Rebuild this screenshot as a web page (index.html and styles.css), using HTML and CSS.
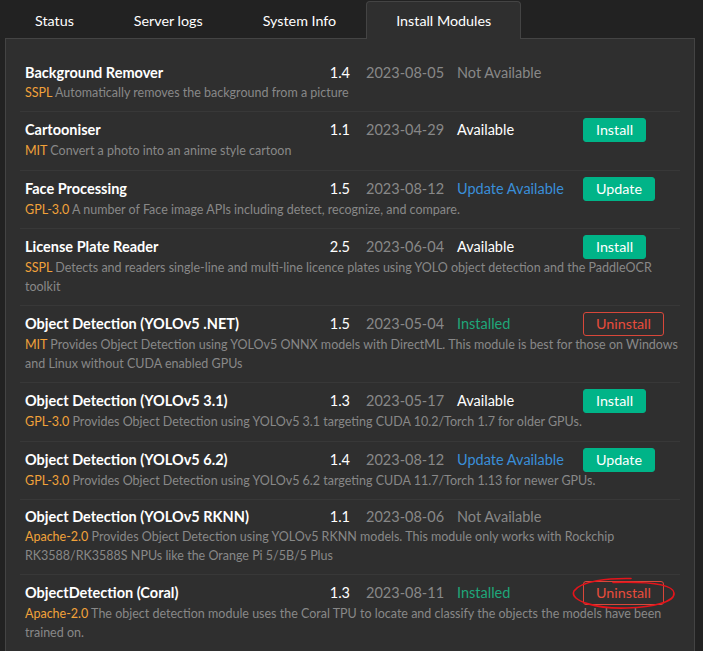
FILE: index.html
```html
<!DOCTYPE html>
<html lang="en">
<head>
    <meta charset="UTF-8">
    <meta name="viewport" content="width=device-width, initial-scale=1.0">
    <title>Install Modules</title>
    <link rel="stylesheet" href="styles.css">
</head>
<body>
    <div class="page">
        <ul class="tabs">
            <li class="tab">Status</li>
            <li class="tab">Server logs</li>
            <li class="tab">System Info</li>
            <li class="tab active">Install Modules</li>
        </ul>
        <div class="panel">
            <div class="module">
                <div class="name-cell"><span class="name">Background Remover</span><span class="version">1.4</span></div>
                <div class="date">2023-08-05</div>
                <div class="status muted">Not Available</div>
                <div class="action"></div>
                <div class="desc"><span class="license">SSPL</span> Automatically removes the background from a picture</div>
            </div>
            <div class="module">
                <div class="name-cell"><span class="name">Cartooniser</span><span class="version">1.1</span></div>
                <div class="date">2023-04-29</div>
                <div class="status">Available</div>
                <div class="action"><button class="btn btn-install">Install</button></div>
                <div class="desc"><span class="license">MIT</span> Convert a photo into an anime style cartoon</div>
            </div>
            <div class="module">
                <div class="name-cell"><span class="name">Face Processing</span><span class="version">1.5</span></div>
                <div class="date">2023-08-12</div>
                <div class="status update">Update Available</div>
                <div class="action"><button class="btn btn-install">Update</button></div>
                <div class="desc"><span class="license">GPL-3.0</span> A number of Face image APIs including detect, recognize, and compare.</div>
            </div>
            <div class="module">
                <div class="name-cell"><span class="name">License Plate Reader</span><span class="version">2.5</span></div>
                <div class="date">2023-06-04</div>
                <div class="status">Available</div>
                <div class="action"><button class="btn btn-install">Install</button></div>
                <div class="desc"><span class="license">SSPL</span> Detects and readers single-line and multi-line licence plates using YOLO object detection and the PaddleOCR toolkit</div>
            </div>
            <div class="module">
                <div class="name-cell"><span class="name">Object Detection (YOLOv5 .NET)</span><span class="version">1.5</span></div>
                <div class="date">2023-05-04</div>
                <div class="status installed">Installed</div>
                <div class="action"><button class="btn btn-uninstall">Uninstall</button></div>
                <div class="desc"><span class="license">MIT</span> Provides Object Detection using YOLOv5 ONNX models with DirectML. This module is best for those on Windows and Linux without CUDA enabled GPUs</div>
            </div>
            <div class="module">
                <div class="name-cell"><span class="name">Object Detection (YOLOv5 3.1)</span><span class="version">1.3</span></div>
                <div class="date">2023-05-17</div>
                <div class="status">Available</div>
                <div class="action"><button class="btn btn-install">Install</button></div>
                <div class="desc"><span class="license">GPL-3.0</span> Provides Object Detection using YOLOv5 3.1 targeting CUDA 10.2/Torch 1.7 for older GPUs.</div>
            </div>
            <div class="module">
                <div class="name-cell"><span class="name">Object Detection (YOLOv5 6.2)</span><span class="version">1.4</span></div>
                <div class="date">2023-08-12</div>
                <div class="status update">Update Available</div>
                <div class="action"><button class="btn btn-install">Update</button></div>
                <div class="desc"><span class="license">GPL-3.0</span> Provides Object Detection using YOLOv5 6.2 targeting CUDA 11.7/Torch 1.13 for newer GPUs.</div>
            </div>
            <div class="module">
                <div class="name-cell"><span class="name">Object Detection (YOLOv5 RKNN)</span><span class="version">1.1</span></div>
                <div class="date">2023-08-06</div>
                <div class="status muted">Not Available</div>
                <div class="action"></div>
                <div class="desc"><span class="license">Apache-2.0</span> Provides Object Detection using YOLOv5 RKNN models. This module only works with Rockchip RK3588/RK3588S NPUs like the Orange Pi 5/5B/5 Plus</div>
            </div>
            <div class="module">
                <div class="name-cell"><span class="name">ObjectDetection (Coral)</span><span class="version">1.3</span></div>
                <div class="date">2023-08-11</div>
                <div class="status installed">Installed</div>
                <div class="action">
                    <button class="btn btn-uninstall">Uninstall</button>
                    <!-- hand drawn circle from the screenshot -->
                    <svg class="scribble" width="110" height="36" viewBox="0 0 110 36">
                        <path d="M62 2.5 C40 2, 12 5, 5 15 C0 25, 28 33, 58 32 C84 31, 106 26, 105 17 C104 9, 82 5.5, 44 6.5" fill="none" stroke="#e4141b" stroke-width="1.6" stroke-linecap="round"/>
                    </svg>
                </div>
                <div class="desc"><span class="license">Apache-2.0</span> The object detection module uses the Coral TPU to locate and classify the objects the models have been trained on.</div>
            </div>
        </div>
    </div>
</body>
</html>
```

FILE: styles.css
```css
body {
    margin: 0;
    padding: 0;
    font-family: 'Lato', 'Noto Sans', sans-serif;
    background: #222;
    color: #fff;
    overflow: hidden;
}

.page {
    padding: 0 8px 0 5px;
}

.tabs {
    list-style: none;
    margin: 0;
    padding: 1px 0 0 0;
    display: flex;
}

.tab {
    font-size: 14.3px;
    line-height: 20px;
    padding: 9px 29px 8px;
    border: 1px solid transparent;
    border-bottom: none;
    border-radius: 4px 4px 0 0;
    margin-bottom: -1px;
    position: relative;
}

.tab.active {
    background: #2f2f2f;
    border-color: #444;
    z-index: 1;
}

.panel {
    background: #2f2f2f;
    border: 1px solid #444;
    padding: 17px 14px 20px;
}

.module {
    display: grid;
    grid-template-columns: 1fr 91px 126px 92px;
    align-items: center;
    padding: 7px 5px 9.3px;
    border-top: 1px solid #383838;
}

.module:first-child {
    border-top: none;
}

.name-cell {
    display: flex;
    justify-content: space-between;
    align-items: center;
    padding-right: 16px;
    line-height: 20px;
}

.name {
    font-weight: bold;
    font-size: 14.5px;
}

.version {
    font-size: 14.5px;
}

.date {
    font-size: 14.5px;
    line-height: 20px;
    color: #888;
}

.status {
    font-size: 14.5px;
    line-height: 20px;
    color: #fff;
}

.status.muted {
    color: #888;
}

.status.update {
    color: #3a8ed8;
}

.status.installed {
    color: #1ea77a;
}

.action {
    position: relative;
    display: flex;
    align-items: center;
}

.desc {
    grid-column: 1 / -1;
    margin-right: -5px;
    font-size: 12.5px;
    line-height: 19px;
    color: #888;
}

.license {
    color: #f2a23a;
}

.btn {
    font-family: 'Lato', 'Noto Sans', sans-serif;
    font-size: 14.3px;
    height: 24px;
    line-height: 22px;
    margin: -1px 0;
    padding: 0 12px;
    border-radius: 3px;
    border: 1px solid transparent;
    cursor: pointer;
}

.btn-install {
    background: #00b488;
    border-color: #00b488;
    color: #fff;
}

.btn-uninstall {
    background: transparent;
    border-color: #d8473a;
    color: #e74c3c;
}

.scribble {
    position: absolute;
    left: -14px;
    top: -6px;
    pointer-events: none;
}
```
